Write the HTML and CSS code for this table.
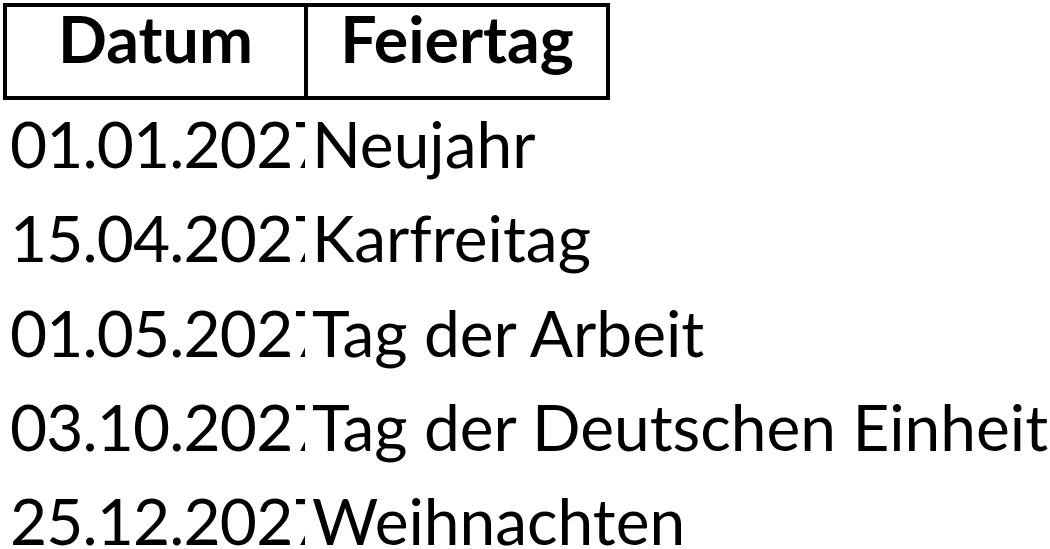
FILE: index.html
```html
<!DOCTYPE html>
<html lang="de">
<head>
<meta charset="utf-8">
<title>Feiertage</title>
<link rel="stylesheet" href="styles.css">
</head>
<body>
<div class="table">
  <div class="head">
    <div class="th th-first">Datum</div>
    <div class="th">Feiertag</div>
  </div>
  <div class="row"><div class="td date">01.01.2027</div><div class="td name">Neujahr</div></div>
  <div class="row"><div class="td date">15.04.2027</div><div class="td name">Karfreitag</div></div>
  <div class="row"><div class="td date">01.05.2027</div><div class="td name">Tag der Arbeit</div></div>
  <div class="row"><div class="td date">03.10.2027</div><div class="td name">Tag der Deutschen Einheit</div></div>
  <div class="row"><div class="td date">25.12.2027</div><div class="td name">Weihnachten</div></div>
</div>
</body>
</html>
```
FILE: styles.css
```css
html, body {
  margin: 0;
  padding: 0;
  background: #fff;
}
body {
  font-family: Lato, "Noto Sans", sans-serif;
  color: #000;
  overflow: hidden;
}
.table {
  margin: 3px 0 0 3px;
  font-size: 64px;
  line-height: 64px;
}
.head {
  display: grid;
  grid-template-columns: 301px 302px;
  width: 607px;
  border-left: 4px solid #000;
}
.th {
  font-weight: 700;
  font-size: 64.5px;
  text-align: center;
  border: 4px solid #000;
  border-left: none;
  height: 89px;
  box-sizing: content-box;
  white-space: nowrap;
  line-height: 62px;
}
.row {
  display: grid;
  grid-template-columns: 302px auto;
  height: 94.25px;
}
.td {
  white-space: nowrap;
  padding-top: 12px;
}
.date {
  padding-left: 7px;
  letter-spacing: -0.85px;
  overflow: hidden;
}
.name {
  padding-left: 7px;
}
```
